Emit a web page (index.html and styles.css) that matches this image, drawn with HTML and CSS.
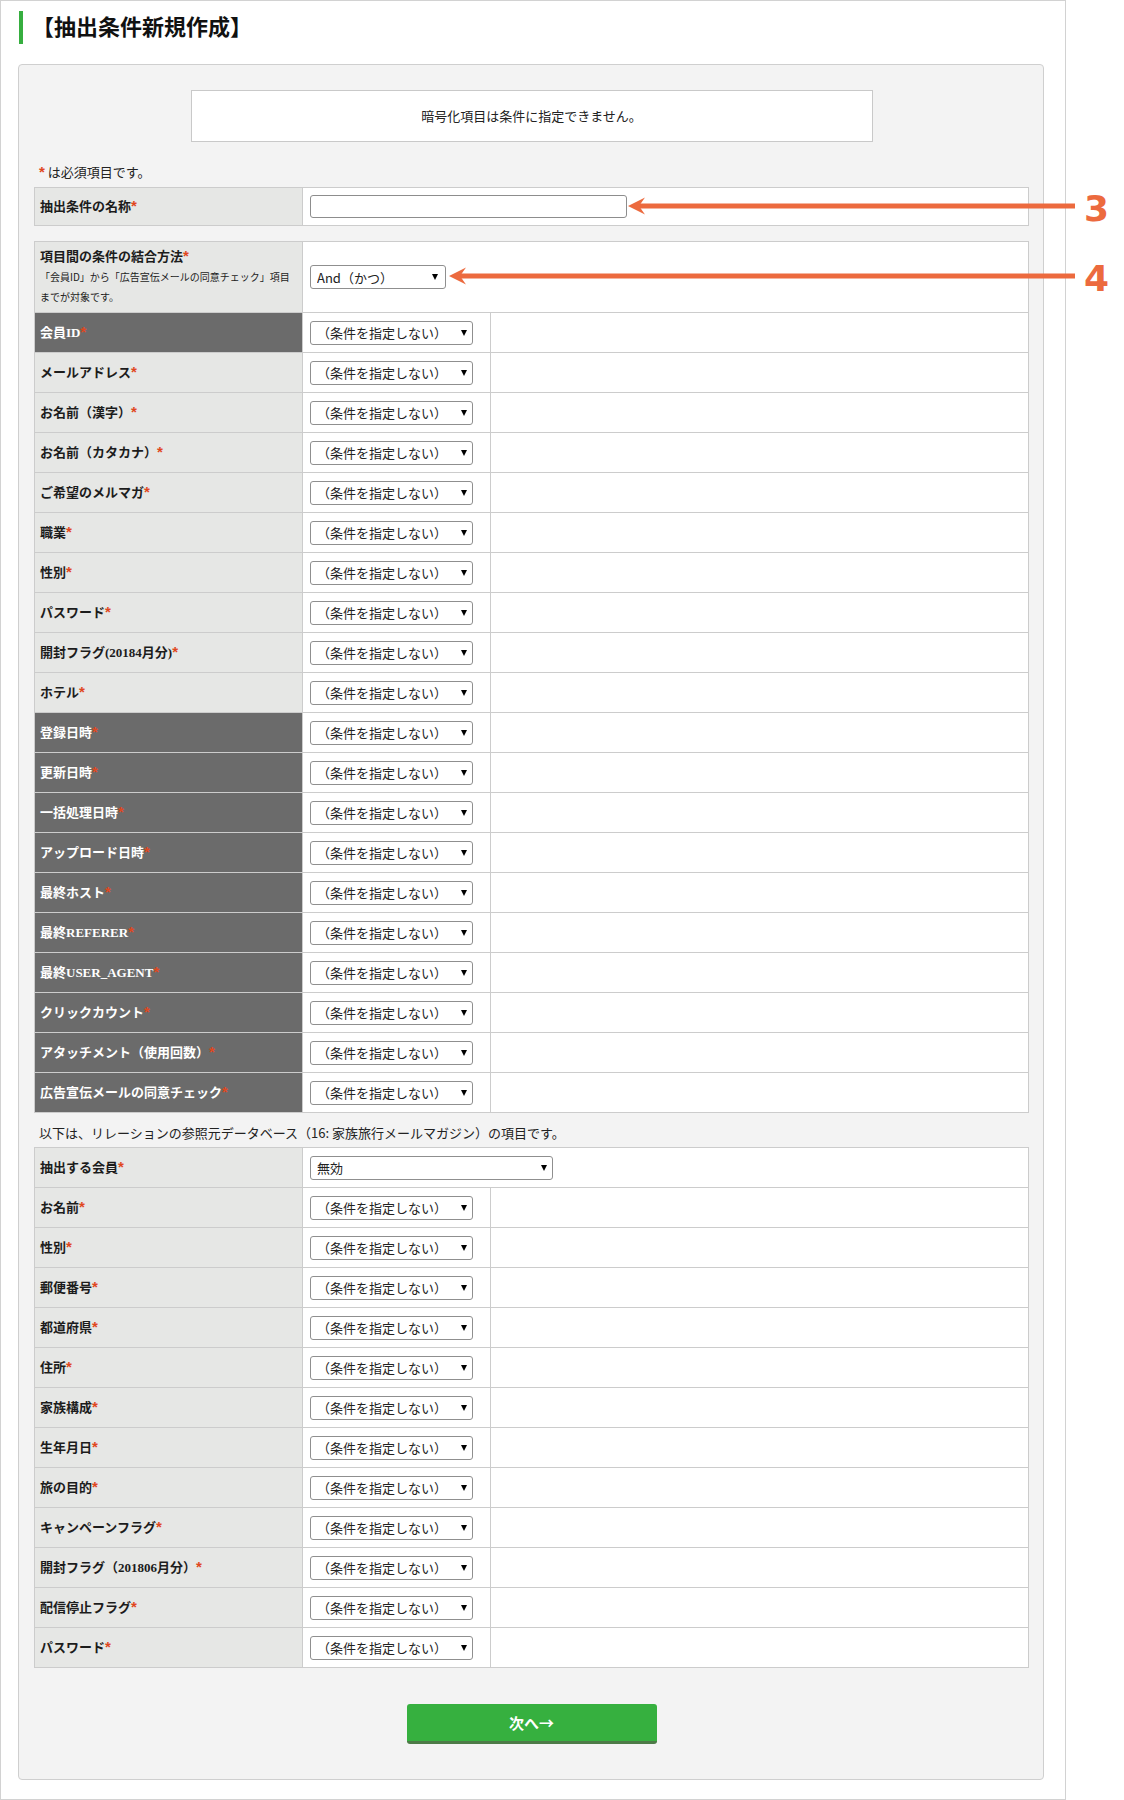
FILE: index.html
```html
<!DOCTYPE html>
<html lang="ja">
<head>
    <meta charset="UTF-8">
    <meta name="viewport" content="width=device-width, initial-scale=1.0">
    <title>抽出条件新規作成</title>
    <link rel="stylesheet" href="styles.css">
</head>
<body>
    <div class="page">
        <h1 class="page-title">【抽出条件新規作成】</h1>

        <div class="panel">
            <div class="notice">暗号化項目は条件に指定できません。</div>
            <p class="required"><span class="req">*</span> は必須項目です。</p>

            <table class="form-table name-table">
                <colgroup><col class="col-label"><col></colgroup>
                <tr>
                    <th>抽出条件の名称<span class="req">*</span></th>
                    <td><input type="text" class="text-input"></td>
                </tr>
            </table>

            <table class="form-table cond-table">
                <colgroup><col class="col-label"><col class="col-op"><col></colgroup>
                <tr class="combine-row">
                    <th>
                        <div class="combine-title">項目間の条件の結合方法<span class="req">*</span></div>
                        <div class="combine-desc">「会員ID」から「広告宣伝メールの同意チェック」項目<br>までが対象です。</div>
                    </th>
                    <td colspan="2"><span class="sel sel-combine"><select><option>And（かつ）</option></select></span></td>
                </tr>
                <tr><th class="sys">会員ID<span class="req">*</span></th><td><span class="sel"><select><option>（条件を指定しない）</option></select></span></td><td></td></tr>
                <tr><th>メールアドレス<span class="req">*</span></th><td><span class="sel"><select><option>（条件を指定しない）</option></select></span></td><td></td></tr>
                <tr><th>お名前（漢字）<span class="req">*</span></th><td><span class="sel"><select><option>（条件を指定しない）</option></select></span></td><td></td></tr>
                <tr><th>お名前（カタカナ）<span class="req">*</span></th><td><span class="sel"><select><option>（条件を指定しない）</option></select></span></td><td></td></tr>
                <tr><th>ご希望のメルマガ<span class="req">*</span></th><td><span class="sel"><select><option>（条件を指定しない）</option></select></span></td><td></td></tr>
                <tr><th>職業<span class="req">*</span></th><td><span class="sel"><select><option>（条件を指定しない）</option></select></span></td><td></td></tr>
                <tr><th>性別<span class="req">*</span></th><td><span class="sel"><select><option>（条件を指定しない）</option></select></span></td><td></td></tr>
                <tr><th>パスワード<span class="req">*</span></th><td><span class="sel"><select><option>（条件を指定しない）</option></select></span></td><td></td></tr>
                <tr><th>開封フラグ(20184月分)<span class="req">*</span></th><td><span class="sel"><select><option>（条件を指定しない）</option></select></span></td><td></td></tr>
                <tr><th>ホテル<span class="req">*</span></th><td><span class="sel"><select><option>（条件を指定しない）</option></select></span></td><td></td></tr>
                <tr><th class="sys">登録日時<span class="req">*</span></th><td><span class="sel"><select><option>（条件を指定しない）</option></select></span></td><td></td></tr>
                <tr><th class="sys">更新日時<span class="req">*</span></th><td><span class="sel"><select><option>（条件を指定しない）</option></select></span></td><td></td></tr>
                <tr><th class="sys">一括処理日時<span class="req">*</span></th><td><span class="sel"><select><option>（条件を指定しない）</option></select></span></td><td></td></tr>
                <tr><th class="sys">アップロード日時<span class="req">*</span></th><td><span class="sel"><select><option>（条件を指定しない）</option></select></span></td><td></td></tr>
                <tr><th class="sys">最終ホスト<span class="req">*</span></th><td><span class="sel"><select><option>（条件を指定しない）</option></select></span></td><td></td></tr>
                <tr><th class="sys">最終REFERER<span class="req">*</span></th><td><span class="sel"><select><option>（条件を指定しない）</option></select></span></td><td></td></tr>
                <tr><th class="sys">最終USER_AGENT<span class="req">*</span></th><td><span class="sel"><select><option>（条件を指定しない）</option></select></span></td><td></td></tr>
                <tr><th class="sys">クリックカウント<span class="req">*</span></th><td><span class="sel"><select><option>（条件を指定しない）</option></select></span></td><td></td></tr>
                <tr><th class="sys">アタッチメント（使用回数）<span class="req">*</span></th><td><span class="sel"><select><option>（条件を指定しない）</option></select></span></td><td></td></tr>
                <tr><th class="sys">広告宣伝メールの同意チェック<span class="req">*</span></th><td><span class="sel"><select><option>（条件を指定しない）</option></select></span></td><td></td></tr>
            </table>

            <p class="relation-note">以下は、リレーションの参照元データベース（16: 家族旅行メールマガジン）の項目です。</p>

            <table class="form-table">
                <colgroup><col class="col-label"><col class="col-op"><col></colgroup>
                <tr><th>抽出する会員<span class="req">*</span></th><td colspan="2"><span class="sel sel-wide"><select><option>無効</option></select></span></td></tr>
                <tr><th>お名前<span class="req">*</span></th><td><span class="sel"><select><option>（条件を指定しない）</option></select></span></td><td></td></tr>
                <tr><th>性別<span class="req">*</span></th><td><span class="sel"><select><option>（条件を指定しない）</option></select></span></td><td></td></tr>
                <tr><th>郵便番号<span class="req">*</span></th><td><span class="sel"><select><option>（条件を指定しない）</option></select></span></td><td></td></tr>
                <tr><th>都道府県<span class="req">*</span></th><td><span class="sel"><select><option>（条件を指定しない）</option></select></span></td><td></td></tr>
                <tr><th>住所<span class="req">*</span></th><td><span class="sel"><select><option>（条件を指定しない）</option></select></span></td><td></td></tr>
                <tr><th>家族構成<span class="req">*</span></th><td><span class="sel"><select><option>（条件を指定しない）</option></select></span></td><td></td></tr>
                <tr><th>生年月日<span class="req">*</span></th><td><span class="sel"><select><option>（条件を指定しない）</option></select></span></td><td></td></tr>
                <tr><th>旅の目的<span class="req">*</span></th><td><span class="sel"><select><option>（条件を指定しない）</option></select></span></td><td></td></tr>
                <tr><th>キャンペーンフラグ<span class="req">*</span></th><td><span class="sel"><select><option>（条件を指定しない）</option></select></span></td><td></td></tr>
                <tr><th>開封フラグ（201806月分）<span class="req">*</span></th><td><span class="sel"><select><option>（条件を指定しない）</option></select></span></td><td></td></tr>
                <tr><th>配信停止フラグ<span class="req">*</span></th><td><span class="sel"><select><option>（条件を指定しない）</option></select></span></td><td></td></tr>
                <tr><th>パスワード<span class="req">*</span></th><td><span class="sel"><select><option>（条件を指定しない）</option></select></span></td><td></td></tr>
            </table>

            <div class="actions">
                <button type="button" class="next-button">次へ→</button>
            </div>
        </div>

        <!-- callouts drawn over the form -->
        <svg class="callouts" width="1124" height="320" viewBox="0 0 1124 320">
            <rect x="636" y="203.5" width="439" height="5" fill="#ec6a3e"/>
            <polygon points="628,206 645,197.5 639,206 645,214.5" fill="#ec6a3e"/>
            <text x="1084" y="221" class="callout-num">3</text>
            <rect x="457" y="273.5" width="618" height="5" fill="#ec6a3e"/>
            <polygon points="449,276 466,267.5 460,276 466,284.5" fill="#ec6a3e"/>
            <text x="1084" y="291" class="callout-num">4</text>
        </svg>
    </div>
</body>
</html>
```

FILE: styles.css
```css
* {
    box-sizing: border-box;
}
body {
    margin: 0;
    background-color: #fff;
    color: #222;
    font-family: "Noto Sans CJK JP", sans-serif;
    font-size: 13px;
}
.page {
    position: relative;
    width: 1066px;
    height: 1800px;
    border: 1px solid #d2d2d2;
    padding: 10px 21px 0 17px;
}
.page-title {
    height: 33px;
    margin: 0 0 20px 1px;
    padding-left: 9px;
    border-left: 4px solid #36ae3f;
    font-size: 22px;
    font-weight: bold;
    line-height: 28px;
    color: #111;
}
.panel {
    border: 1px solid #cfcfcf;
    border-radius: 4px;
    background-color: #f3f3f3;
    padding: 25px 14px 35px 15px;
}
.notice {
    width: 682px;
    height: 52px;
    margin: 0 auto;
    border: 1px solid #c9c9c9;
    background-color: #fff;
    text-align: center;
    line-height: 50px;
}
.required {
    margin: 20px 0 5px 5px;
    line-height: 20px;
}
.req {
    color: #e0471e;
    font-family: "Liberation Sans", sans-serif;
    font-size: 15px;
    font-weight: bold;
    line-height: 1;
}
.form-table {
    width: 100%;
    border-collapse: collapse;
    table-layout: fixed;
    background-color: #fff;
}
.col-label {
    width: 268px;
}
.col-op {
    width: 188px;
}
.form-table th,
.form-table td {
    height: 40px;
    border: 1px solid #cccccc;
    padding: 0;
    vertical-align: middle;
}
.form-table th {
    padding: 0 0 2px 5px;
    background-color: #e6e7e5;
    text-align: left;
    font-family: "Liberation Serif", "Noto Sans CJK JP", serif;
    font-weight: bold;
    color: #1c1c1c;
}
.form-table th.sys {
    background-color: #6b6b6b;
    color: #fff;
}
.form-table td {
    padding-left: 7px;
}
.name-table th,
.name-table td {
    height: 38px;
}
.cond-table {
    margin-top: 15px;
}
.combine-row th,
.combine-row td {
    height: 71px;
}
.combine-row th {
    padding: 5px 4px 4px 5px;
    vertical-align: top;
}
.combine-title {
    line-height: 20px;
}
.combine-desc {
    font-family: "Noto Sans CJK JP", sans-serif;
    font-size: 10px;
    font-weight: normal;
    line-height: 19.5px;
    white-space: nowrap;
}
.text-input {
    display: block;
    width: 317px;
    height: 23px;
    border: 1px solid #8d8d8d;
    border-radius: 3px;
    background-color: #fff;
}
.sel {
    position: relative;
    display: block;
    width: 163px;
    height: 24px;
}
.sel::after {
    content: "";
    position: absolute;
    right: 6px;
    top: 9px;
    border-left: 3.5px solid transparent;
    border-right: 3.5px solid transparent;
    border-top: 6px solid #000;
    pointer-events: none;
}
.sel select {
    appearance: none;
    -webkit-appearance: none;
    width: 100%;
    height: 100%;
    margin: 0;
    padding: 0 0 0 6px;
    border: 1px solid #8f8f8f;
    border-radius: 3px;
    background-color: #fff;
    color: #222;
    font-family: "Noto Sans CJK JP", sans-serif;
    font-size: 13px;
    outline: none;
}
.sel-combine {
    width: 136px;
}
.sel-combine::after {
    right: 8px;
}
.sel-wide {
    width: 243px;
}
.relation-note {
    margin: 10px 0 4px 5px;
    line-height: 20px;
}
.actions {
    display: flex;
    justify-content: center;
    margin-top: 36px;
}
.next-button {
    width: 250px;
    height: 40px;
    border: none;
    border-bottom: 3px solid #4d7a47;
    border-radius: 3px;
    background-color: #36b03f;
    color: #fff;
    font-family: "Noto Sans CJK JP", sans-serif;
    font-size: 15px;
    font-weight: bold;
    cursor: pointer;
}
.callouts {
    position: absolute;
    left: -1px;
    top: -1px;
    pointer-events: none;
}
.callout-num {
    fill: #ec6a3e;
    font-family: "DejaVu Sans", sans-serif;
    font-size: 36px;
    font-weight: bold;
}
```
